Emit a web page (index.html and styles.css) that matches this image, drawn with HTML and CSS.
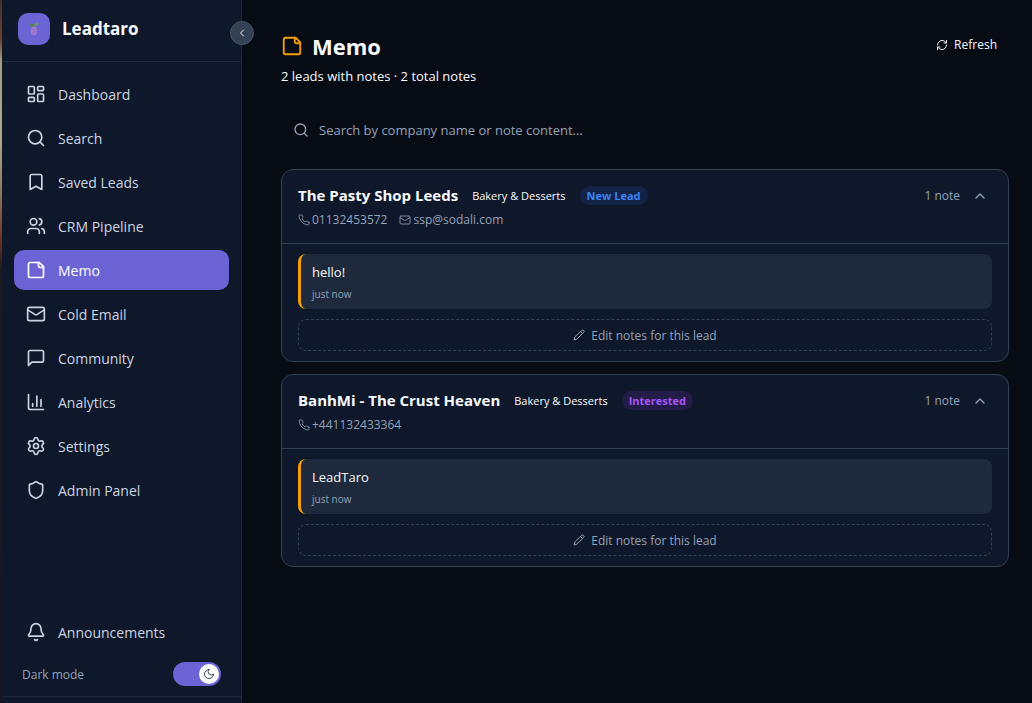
FILE: index.html
```html
<!DOCTYPE html>
<html lang="en">
<head>
    <meta charset="UTF-8">
    <meta name="viewport" content="width=device-width, initial-scale=1.0">
    <title>Leadtaro - Memo</title>
    <link rel="stylesheet" href="styles.css">
</head>
<body>
    <svg class="sprite" width="0" height="0" aria-hidden="true">
        <symbol id="i-note" viewBox="0 0 24 24"><path d="M16 3H5a2 2 0 0 0-2 2v14a2 2 0 0 0 2 2h14a2 2 0 0 0 2-2V8Z"/><path d="M15 3v4a2 2 0 0 0 2 2h4"/></symbol>
        <symbol id="i-search" viewBox="0 0 24 24"><circle cx="11" cy="11" r="8"/><path d="m21 21-4.3-4.3"/></symbol>
        <symbol id="i-mail" viewBox="0 0 24 24"><rect x="2" y="4" width="20" height="16" rx="2"/><path d="m22 7-8.97 5.7a1.94 1.94 0 0 1-2.06 0L2 7"/></symbol>
        <symbol id="i-phone" viewBox="0 0 24 24"><path d="M22 16.92v3a2 2 0 0 1-2.18 2 19.79 19.79 0 0 1-8.63-3.07 19.5 19.5 0 0 1-6-6 19.79 19.79 0 0 1-3.07-8.67A2 2 0 0 1 4.11 2h3a2 2 0 0 1 2 1.72c.13.96.36 1.9.7 2.81a2 2 0 0 1-.45 2.11L8.09 9.91a16 16 0 0 0 6 6l1.27-1.27a2 2 0 0 1 2.11-.45c.91.34 1.85.57 2.81.7A2 2 0 0 1 22 16.92z"/></symbol>
        <symbol id="i-up" viewBox="0 0 24 24"><path d="m18 15-6-6-6 6"/></symbol>
        <symbol id="i-pencil" viewBox="0 0 24 24"><path d="M17 3a2.85 2.83 0 1 1 4 4L7.5 20.5 2 22l1.5-5.5Z"/><path d="m15 5 4 4"/></symbol>
    </svg>

    <div class="app">
        <aside class="sidebar">
            <div class="brand">
                <span class="logo">
                    <svg width="12" height="14" viewBox="0 0 12 14">
                        <ellipse cx="6" cy="9" rx="3.3" ry="4.4" fill="#a47bd0"/>
                        <path d="M4 7.5h1.5M6.5 10h1.5M4.5 11.3h1.2M6.5 6.8h1.2" stroke="#8a62b8" stroke-width="1"/>
                        <path d="M6 4.5C4 5 2 4.2 1.5 2 4 1.5 5.6 2.500 6 4.500Z" fill="#4c8a3c"/>
                        <path d="M6 4C6 1.5 8 .6 10.8 1 10.5 3.2 8.5 4.3 6 4Z" fill="#65a34a"/>
                    </svg>
                </span>
                <span class="brand-name">Leadtaro</span>
            </div>
            <button class="collapse" aria-label="Collapse sidebar">
                <svg class="icon" width="12" height="12" viewBox="0 0 24 24"><path d="m15 18-6-6 6-6"/></svg>
            </button>

            <nav class="nav">
                <a href="#" class="nav-item">
                    <svg class="icon" width="20" height="20" viewBox="0 0 24 24"><rect x="3" y="3" width="7" height="9" rx="1"/><rect x="14" y="3" width="7" height="5" rx="1"/><rect x="14" y="12" width="7" height="9" rx="1"/><rect x="3" y="16" width="7" height="5" rx="1"/></svg>
                    Dashboard
                </a>
                <a href="#" class="nav-item">
                    <svg class="icon" width="20" height="20"><use href="#i-search"/></svg>
                    Search
                </a>
                <a href="#" class="nav-item">
                    <svg class="icon" width="20" height="20" viewBox="0 0 24 24"><path d="m19 21-7-4-7 4V5a2 2 0 0 1 2-2h10a2 2 0 0 1 2 2z"/></svg>
                    Saved Leads
                </a>
                <a href="#" class="nav-item">
                    <svg class="icon" width="20" height="20" viewBox="0 0 24 24"><path d="M16 21v-2a4 4 0 0 0-4-4H6a4 4 0 0 0-4 4v2"/><circle cx="9" cy="7" r="4"/><path d="M22 21v-2a4 4 0 0 0-3-3.87"/><path d="M16 3.13a4 4 0 0 1 0 7.75"/></svg>
                    CRM Pipeline
                </a>
                <a href="#" class="nav-item active">
                    <svg class="icon" width="20" height="20"><use href="#i-note"/></svg>
                    Memo
                </a>
                <a href="#" class="nav-item">
                    <svg class="icon" width="20" height="20"><use href="#i-mail"/></svg>
                    Cold Email
                </a>
                <a href="#" class="nav-item">
                    <svg class="icon" width="20" height="20" viewBox="0 0 24 24"><path d="M21 15a2 2 0 0 1-2 2H7l-4 4V5a2 2 0 0 1 2-2h14a2 2 0 0 1 2 2z"/></svg>
                    Community
                </a>
                <a href="#" class="nav-item">
                    <svg class="icon" width="20" height="20" viewBox="0 0 24 24"><path d="M3 3v16a2 2 0 0 0 2 2h16"/><path d="M18 17V9M13 17V5M8 17v-3"/></svg>
                    Analytics
                </a>
                <a href="#" class="nav-item">
                    <svg class="icon" width="20" height="20" viewBox="0 0 24 24"><path d="M9.671 4.136a2.34 2.34 0 0 1 4.659 0 2.34 2.34 0 0 0 3.319 1.915 2.34 2.34 0 0 1 2.33 4.033 2.34 2.34 0 0 0 0 3.831 2.34 2.34 0 0 1-2.33 4.033 2.34 2.34 0 0 0-3.319 1.915 2.34 2.34 0 0 1-4.659 0 2.34 2.34 0 0 0-3.32-1.915 2.34 2.34 0 0 1-2.33-4.033 2.34 2.34 0 0 0 0-3.831A2.34 2.34 0 0 1 6.35 6.051a2.34 2.34 0 0 0 3.319-1.915"/><circle cx="12" cy="12" r="3"/></svg>
                    Settings
                </a>
                <a href="#" class="nav-item">
                    <svg class="icon" width="20" height="20" viewBox="0 0 24 24"><path d="M20 13c0 5-3.5 7.5-7.66 8.95a1 1 0 0 1-.67-.01C7.5 20.5 4 18 4 13V6a1 1 0 0 1 1-1c2 0 4.5-1.2 6.24-2.72a1.17 1.17 0 0 1 1.52 0C14.51 3.81 17 5 19 5a1 1 0 0 1 1 1z"/></svg>
                    Admin Panel
                </a>
            </nav>

            <div class="sidebar-bottom">
                <a href="#" class="nav-item">
                    <svg class="icon" width="20" height="20" viewBox="0 0 24 24"><path d="M10.268 21a2 2 0 0 0 3.464 0"/><path d="M3.262 15.326A1 1 0 0 0 4 17h16a1 1 0 0 0 .74-1.673C19.41 13.956 18 12.499 18 8A6 6 0 0 0 6 8c0 4.499-1.411 5.956-2.738 7.326"/></svg>
                    Announcements
                </a>
                <div class="theme-row">
                    <label for="dark-mode">Dark mode</label>
                    <span class="switch">
                        <input type="checkbox" id="dark-mode" checked>
                        <span class="knob">
                            <svg class="icon" width="12" height="12" viewBox="0 0 24 24"><path d="M12 3a6 6 0 0 0 9 9 9 9 0 1 1-9-9Z"/></svg>
                        </span>
                    </span>
                </div>
            </div>
        </aside>

        <main class="main">
            <header class="page-header">
                <div>
                    <h1><svg class="icon" width="22" height="22"><use href="#i-note"/></svg>Memo</h1>
                    <p class="summary">2 leads with notes · 2 total notes</p>
                </div>
                <button class="refresh">
                    <svg class="icon" width="12" height="12" viewBox="0 0 24 24"><path d="M3 12a9 9 0 0 1 9-9 9.75 9.75 0 0 1 6.74 2.74L21 8"/><path d="M21 3v5h-5"/><path d="M21 12a9 9 0 0 1-9 9 9.75 9.75 0 0 1-6.74-2.74L3 16"/><path d="M8 16H3v5"/></svg>
                    Refresh
                </button>
            </header>

            <div class="search">
                <svg class="icon" width="16" height="16"><use href="#i-search"/></svg>
                <input type="text" placeholder="Search by company name or note content..." aria-label="Search notes">
            </div>

            <div class="leads">
                <section class="card">
                    <div class="card-header">
                        <div class="lead">
                            <div class="lead-title">
                                <h2>The Pasty Shop Leeds</h2>
                                <span class="category">Bakery &amp; Desserts</span>
                                <span class="badge badge-new">New Lead</span>
                            </div>
                            <div class="contacts">
                                <span><svg class="icon" width="12" height="12"><use href="#i-phone"/></svg>01132453572</span>
                                <span><svg class="icon" width="12" height="12"><use href="#i-mail"/></svg>ssp@sodali.com</span>
                            </div>
                        </div>
                        <button class="toggle-notes">1 note <svg class="icon" width="16" height="16"><use href="#i-up"/></svg></button>
                    </div>
                    <div class="card-body">
                        <div class="note">
                            <p>hello!</p>
                            <time>just now</time>
                        </div>
                        <button class="edit"><svg class="icon" width="12" height="12"><use href="#i-pencil"/></svg>Edit notes for this lead</button>
                    </div>
                </section>

                <section class="card">
                    <div class="card-header">
                        <div class="lead">
                            <div class="lead-title">
                                <h2>BanhMi - The Crust Heaven</h2>
                                <span class="category">Bakery &amp; Desserts</span>
                                <span class="badge badge-interested">Interested</span>
                            </div>
                            <div class="contacts">
                                <span><svg class="icon" width="12" height="12"><use href="#i-phone"/></svg>+441132433364</span>
                            </div>
                        </div>
                        <button class="toggle-notes">1 note <svg class="icon" width="16" height="16"><use href="#i-up"/></svg></button>
                    </div>
                    <div class="card-body">
                        <div class="note">
                            <p>LeadTaro</p>
                            <time>just now</time>
                        </div>
                        <button class="edit"><svg class="icon" width="12" height="12"><use href="#i-pencil"/></svg>Edit notes for this lead</button>
                    </div>
                </section>
            </div>
        </main>
    </div>
</body>
</html>
```
FILE: styles.css
```css
* {
    margin: 0;
    padding: 0;
    box-sizing: border-box;
}
body {
    font-family: "Open Sans", "Noto Sans", sans-serif;
    font-size: 14px;
    color: #f8fafc;
    background-color: #070b14;
}
button, input {
    font-family: inherit;
    color: inherit;
    background: none;
    border: none;
}
button {
    cursor: pointer;
}
a {
    color: inherit;
    text-decoration: none;
}
.sprite {
    position: absolute;
}
.icon {
    fill: none;
    stroke: currentColor;
    stroke-width: 2;
    stroke-linecap: round;
    stroke-linejoin: round;
    flex-shrink: 0;
}
.app {
    display: flex;
    min-height: 100vh;
    padding-left: 2px;
    background: linear-gradient(#4a2f28 0, #6b4434 40px, #a59a86 60px, #b0a58c 140px, #8f7a60 190px, #6b3522 240px, #1c1a1c 270px, #17161a 100%) left / 2px 100% no-repeat;
}
.sidebar {
    position: relative;
    display: flex;
    flex-direction: column;
    width: 240px;
    height: 100vh;
    flex-shrink: 0;
    background-color: #0f172a;
    border-right: 1px solid #1e293b;
}
.brand {
    display: flex;
    align-items: center;
    gap: 12px;
    height: 62px;
    padding: 0 16px 4px;
    border-bottom: 1px solid #1e293b;
}
.logo {
    display: flex;
    align-items: center;
    justify-content: center;
    width: 32px;
    height: 32px;
    border-radius: 10px;
    background-color: #6c63d5;
}
.brand-name {
    font-size: 17px;
    font-weight: 700;
}
.collapse {
    position: absolute;
    top: 21px;
    right: -13px;
    display: flex;
    align-items: center;
    justify-content: center;
    width: 24px;
    height: 24px;
    border: 1px solid #475569;
    border-radius: 50%;
    background-color: #334155;
    color: #e2e8f0;
}
.nav {
    display: flex;
    flex-direction: column;
    gap: 4px;
    padding: 12px;
}
.nav-item {
    display: flex;
    align-items: center;
    gap: 12px;
    height: 40px;
    padding: 0 12px;
    border-radius: 10px;
    color: #cbd5e1;
}
.nav-item.active {
    background-color: #6c63d5;
    color: #fff;
}
.sidebar-bottom {
    margin-top: auto;
    padding: 0 12px;
}
.sidebar-bottom::after {
    content: "";
    display: block;
    height: 6px;
    margin: 0 -12px;
    border-top: 1px solid #1e293b;
}
.theme-row {
    display: flex;
    align-items: center;
    justify-content: space-between;
    height: 44px;
    padding: 0 8px;
    font-size: 12px;
    color: #94a3b8;
}
.switch {
    position: relative;
    width: 48px;
    height: 24px;
}
.switch input {
    display: block;
    width: 48px;
    height: 24px;
    appearance: none;
    border-radius: 12px;
    background-color: #475569;
    cursor: pointer;
}
.switch input:checked {
    background-color: #6c63d5;
}
.knob {
    position: absolute;
    top: 2px;
    right: 2px;
    display: flex;
    align-items: center;
    justify-content: center;
    width: 20px;
    height: 20px;
    border-radius: 50%;
    background-color: #fff;
    color: #334155;
    pointer-events: none;
}
.main {
    flex: 1;
    min-width: 0;
    padding: 29px 23px 24px 39px;
}
.page-header {
    display: flex;
    align-items: flex-start;
    justify-content: space-between;
}
h1 {
    display: flex;
    align-items: center;
    gap: 9px;
    font-size: 22px;
    line-height: 34px;
}
h1 .icon {
    color: #f59e0b;
}
.summary {
    font-size: 13px;
    line-height: 26px;
}
.refresh {
    display: flex;
    align-items: center;
    gap: 6px;
    padding: 8px 12px;
    font-size: 12px;
    line-height: 16px;
}
.search {
    display: flex;
    align-items: center;
    gap: 10px;
    height: 40px;
    margin: 21px 0 19px;
    padding: 0 12px;
    color: #94a3b8;
}
.search input {
    flex: 1;
    font-size: 13px;
    outline: none;
}
.search input::placeholder {
    color: #94a3b8;
}
.leads {
    display: flex;
    flex-direction: column;
    gap: 12px;
}
.card {
    border: 1px solid #334155;
    border-radius: 12px;
    background-color: #0f172a;
}
.card-header {
    display: flex;
    align-items: flex-start;
    justify-content: space-between;
    padding: 13px 20px 10px 16px;
    border-bottom: 1px solid #334155;
}
.lead-title {
    display: flex;
    align-items: center;
    gap: 14px;
}
h2 {
    font-size: 15px;
    line-height: 24px;
}
.category {
    font-size: 11px;
}
.badge {
    padding: 0 7px;
    border-radius: 10px;
    font-size: 11px;
    font-weight: 700;
    line-height: 19px;
}
.badge-new {
    background-color: #132347;
    color: #3b82f6;
}
.badge-interested {
    background-color: #221c49;
    color: #a855f7;
}
.contacts {
    display: flex;
    gap: 12px;
    font-size: 12px;
    line-height: 26px;
    color: #94a3b8;
}
.contacts span {
    display: flex;
    align-items: center;
    gap: 2px;
}
.contacts .icon {
    color: #7b8aa1;
}
.toggle-notes {
    display: flex;
    align-items: center;
    gap: 12px;
    font-size: 12px;
    line-height: 26px;
    color: #94a3b8;
}
.card-body {
    display: flex;
    flex-direction: column;
    gap: 10px;
    padding: 10px 16px;
}
.note {
    padding: 6px 11px 4px;
    border-left: 3px solid #f59e0b;
    border-radius: 8px;
    background-color: #1e293b;
    font-size: 13px;
    line-height: 24px;
}
.note time {
    display: block;
    font-size: 10px;
    line-height: 21px;
    color: #94a3b8;
}
.edit {
    display: flex;
    align-items: center;
    justify-content: center;
    gap: 6px;
    height: 32px;
    border: 1px dashed #334155;
    border-radius: 8px;
    font-size: 12px;
    color: #94a3b8;
}
```
